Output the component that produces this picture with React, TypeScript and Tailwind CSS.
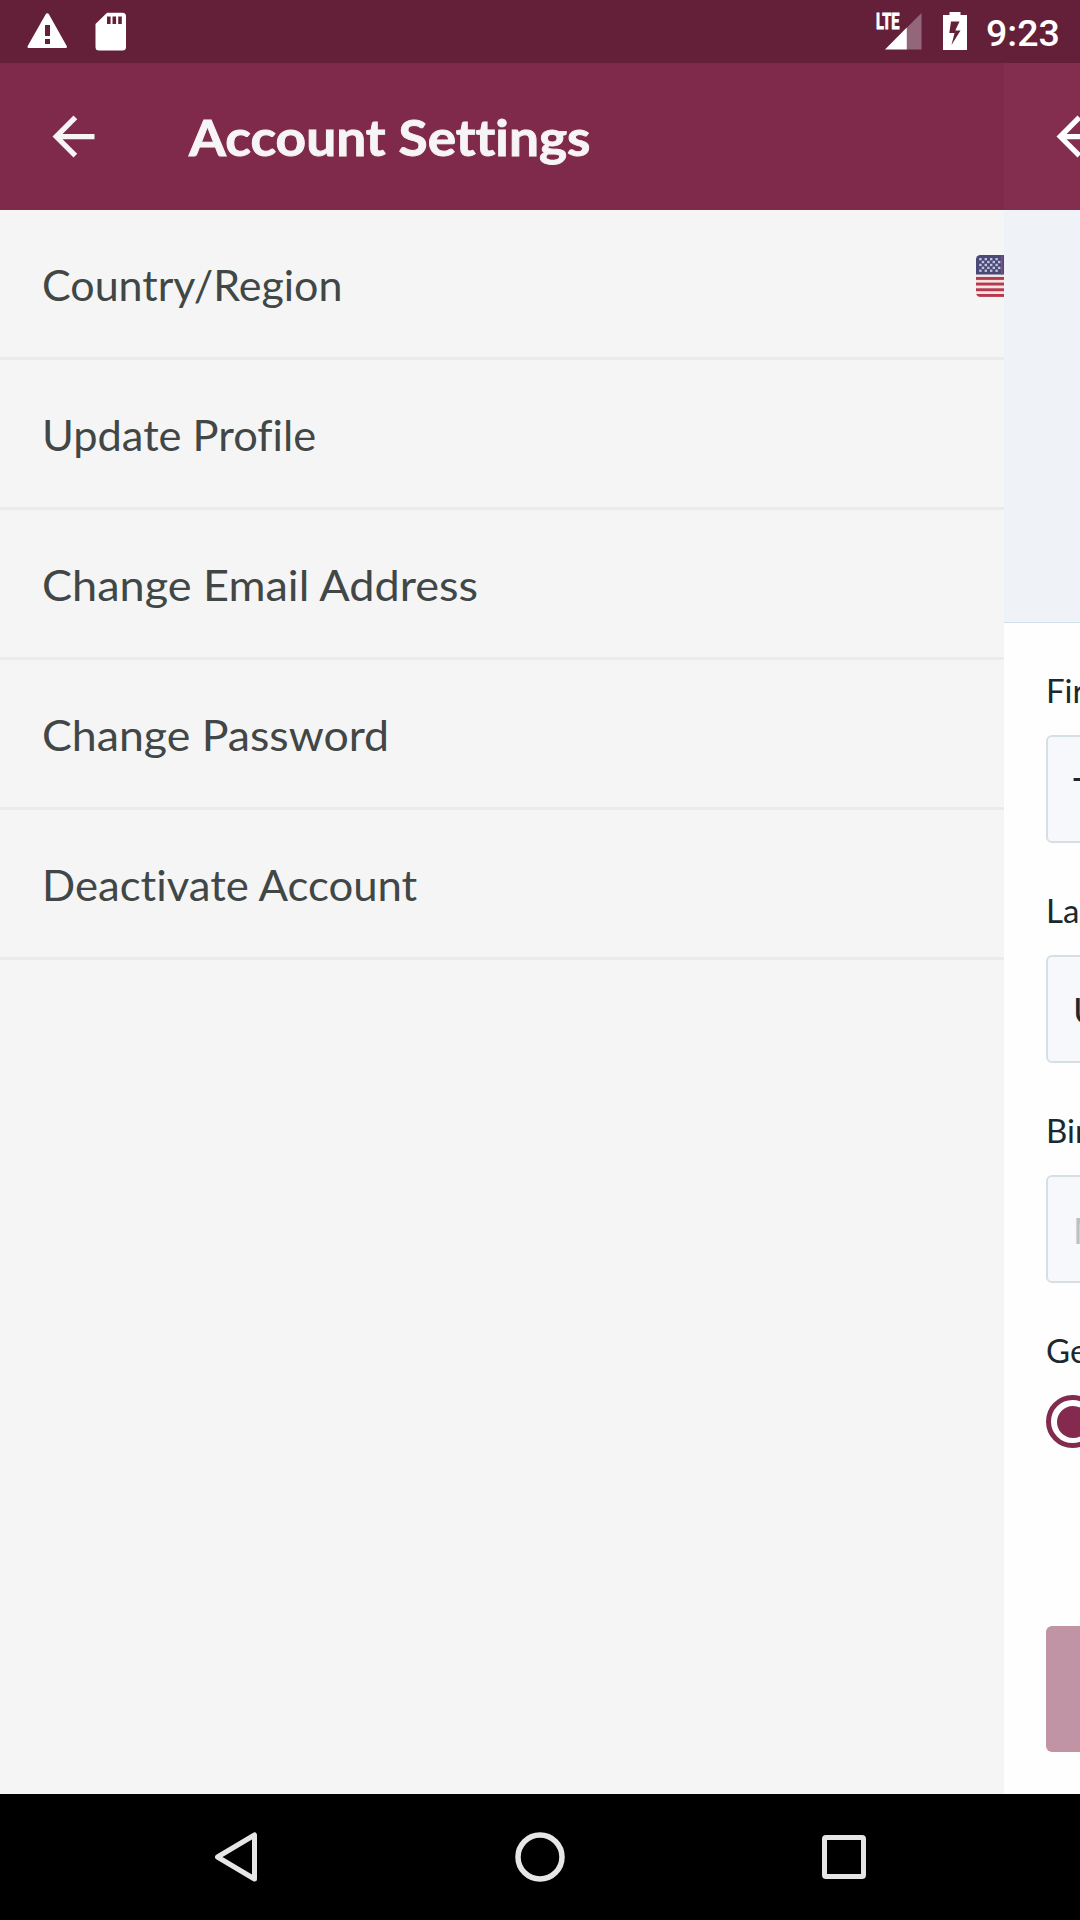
import React from "react";

const menuItems = [
  { label: "Country/Region", stretch: "scale-x-[1.023]", flag: true },
  { label: "Update Profile", stretch: "scale-x-[1.033]" },
  { label: "Change Email Address", stretch: "scale-x-[1.072]" },
  { label: "Change Password", stretch: "scale-x-[1.063]" },
  { label: "Deactivate Account", stretch: "scale-x-[1.040]" },
];

const fields = [
  { label: "First Name", value: "Test", color: "text-[#1b292e]" },
  { label: "Last Name", value: "User", color: "text-[#1b292e]" },
  { label: "Birthday", value: "MM/DD/YYYY", color: "text-[#b2c5cb]" },
];

function BackArrow({ color }: { color: string }) {
  return (
    <svg className="ml-[42px] h-[63px] w-[63px] shrink-0" viewBox="0 0 24 24" fill={color}>
      <path d="M20 11H7.83l5.59-5.59L12 4l-8 8 8 8 1.41-1.41L7.83 13H20v-2z" />
    </svg>
  );
}

function Flag() {
  const stripes = [22, 27.6, 33.3, 39];
  const rows = [0, 1, 2, 3, 4];
  const cols = [0, 1, 2, 3];
  return (
    <svg className="h-[42px] w-[28px] shrink-0" viewBox="0 0 28 42">
      <defs>
        <clipPath id="flag-clip">
          <rect width="60" height="42" rx="4.5" />
        </clipPath>
      </defs>
      <g clipPath="url(#flag-clip)">
        <rect width="28" height="42" fill="#f3e3e1" />
        {stripes.map((y) => (
          <rect key={y} y={y} width="28" height="2.9" fill="#b53a50" />
        ))}
        <rect width="28" height="19.5" fill="#494a78" />
        <rect x="25" width="1.5" height="19.5" fill="#8b4a80" />
        {rows.map((r) =>
          cols.map((c) => (
            <rect
              key={`${r}-${c}`}
              x={(r % 2 ? 5.8 : 3.2) + c * 5.4}
              y={3 + r * 2.9}
              width="2.4"
              height="2.3"
              fill="#c5c3df"
            />
          )),
        )}
      </g>
    </svg>
  );
}

function StatusBar() {
  return (
    <div className="flex h-[63px] w-full shrink-0 items-start bg-[#642039]">
      <svg className="mt-[12px] ml-[27px] h-[37px] w-[41px]" viewBox="0 0 41 37">
        <path
          d="M20.3 1.2c.7 0 1.2.3 1.6 1L39.7 34c.6 1.1.1 2-1 2H1.7c-1.1 0-1.6-.9-1-2L18.7 2.2c.4-.7.9-1 1.6-1zM18 13v11h5V13zm0 14v5h5v-5z"
          fill="#fff"
          fillRule="evenodd"
        />
      </svg>
      <svg className="mt-[12px] ml-[27px] h-[39px] w-[32px]" viewBox="0 0 32 39">
        <path
          d="M12 .8h15.5a3.5 3.5 0 0 1 3.5 3.5v30.7a3.5 3.5 0 0 1-3.5 3.5H4a3.5 3.5 0 0 1-3.5-3.5V12zM12 4.5v7.5h3.6V4.5zm5.5 0v7.5h3.6V4.5zm5.7 0v7.5h3.6V4.5z"
          fill="#fff"
          fillRule="evenodd"
        />
      </svg>
      <div className="relative mt-[12px] ml-auto h-[40px] w-[47px]">
        <svg className="h-[40px] w-[47px]" viewBox="0 0 47 40">
          <path d="M46.5 1v36.5h-15V16z" fill="#946679" />
          <path d="M10 37.5 31.8 15.5v22z" fill="#fff" />
        </svg>
        <span className="absolute top-[-1px] left-[1px] origin-left scale-x-[0.66] font-['Roboto'] text-[22px] leading-[22px] font-bold text-white [-webkit-text-stroke:0.9px_white]">
          LTE
        </span>
      </div>
      <svg className="mt-[12px] ml-[21px] h-[38px] w-[24px]" viewBox="0 0 24 38">
        <path
          d="M6.5 0h11v3H24v35H0V3h6.5zM8 9.5 6.3 21h5.2L8.5 33 17.5 18.5h-5.2L16.5 9.5z"
          fill="#fff"
          fillRule="evenodd"
        />
      </svg>
      <span className="mt-[11px] mr-[23px] ml-[19px] w-[71px] font-['Roboto'] text-[37.5px] leading-[44px] font-medium whitespace-nowrap text-white">
        9:23
      </span>
    </div>
  );
}

function NavBar() {
  return (
    <div className="flex h-[126px] w-full shrink-0 items-center bg-black">
      <svg className="ml-[214px] h-[50px] w-[44px]" viewBox="0 0 44 50" fill="none" stroke="#e6e6e6">
        <path d="M40.5 3v44L3.5 25z" strokeWidth="5" strokeLinejoin="round" />
      </svg>
      <svg className="ml-[257px] h-[50px] w-[50px]" viewBox="0 0 50 50" fill="none" stroke="#e6e6e6">
        <circle cx="25" cy="25" r="22" strokeWidth="5.5" />
      </svg>
      <svg className="ml-[257px] h-[44px] w-[44px]" viewBox="0 0 44 44" fill="none" stroke="#e6e6e6">
        <rect x="2.5" y="2.5" width="39" height="39" rx="1.5" strokeWidth="5" />
      </svg>
    </div>
  );
}

export default function App() {
  return (
    <div className="flex h-[1920px] w-[1080px] flex-col overflow-hidden font-['Lato',sans-serif] [font-variant-ligatures:none]">
      <StatusBar />
      <div className="flex h-[1731px] shrink-0">
        <section className="flex w-[1004px] shrink-0 flex-col overflow-hidden bg-[#f5f5f5]">
          <header className="flex h-[147px] shrink-0 items-center bg-[#802a4b]">
            <BackArrow color="#f6f4f5" />
            <h1 className="ml-[84px] origin-left scale-x-[1.075] text-[49.5px] leading-[60px] font-bold whitespace-nowrap text-[#f6f4f5] [-webkit-text-stroke:0.9px_#f6f4f5]">
              Account Settings
            </h1>
          </header>
          <ul>
            {menuItems.map((item) => (
              <li key={item.label} className="flex h-[150px] justify-between border-b-[3px] border-[#ebebeb] pl-[42px]">
                <span
                  className={`mt-[49px] h-[52px] origin-left text-[42px] leading-[52px] whitespace-nowrap text-[#414746] ${item.stretch}`}
                >
                  {item.label}
                </span>
                {item.flag && (
                  <div className="mt-[45px] flex">
                    <Flag />
                  </div>
                )}
              </li>
            ))}
          </ul>
        </section>
        <section className="flex w-[76px] shrink-0 flex-col overflow-hidden bg-[#fefefe]">
          <header className="flex h-[147px] shrink-0 items-center bg-[#832d4f]">
            <div className="flex w-[1080px] shrink-0">
              <BackArrow color="#ffffff" />
            </div>
          </header>
          <div className="h-[413px] shrink-0 border-b border-[#d0e2ec] bg-[#eff3f7]" />
          <form className="flex w-[1080px] flex-col pt-[47px] pl-[42px]">
            {fields.map((field) => (
              <div key={field.label} className="h-[220px]">
                <div className="h-[65px] text-[33px] leading-[40px] text-[#1b292e]">{field.label}</div>
                <div
                  className={`flex h-[108px] w-[996px] items-center rounded-[6px] border-2 border-[#d5dfe4] bg-[#f6f8fb] pt-[2px] pl-[25px] text-[37px] ${field.color}`}
                >
                  {field.value}
                </div>
              </div>
            ))}
            <div className="h-[65px] text-[33px] leading-[40px] text-[#1b292e]">Gender</div>
            <span className="flex h-[53px] w-[53px] items-center justify-center rounded-full border-[5px] border-[#832a4e]">
              <span className="h-[32px] w-[32px] rounded-full bg-[#832a4e]" />
            </span>
            <div className="mt-[178px] h-[126px] w-[996px] rounded-[6px] bg-[#c094a5]" />
          </form>
        </section>
      </div>
      <NavBar />
    </div>
  );
}
